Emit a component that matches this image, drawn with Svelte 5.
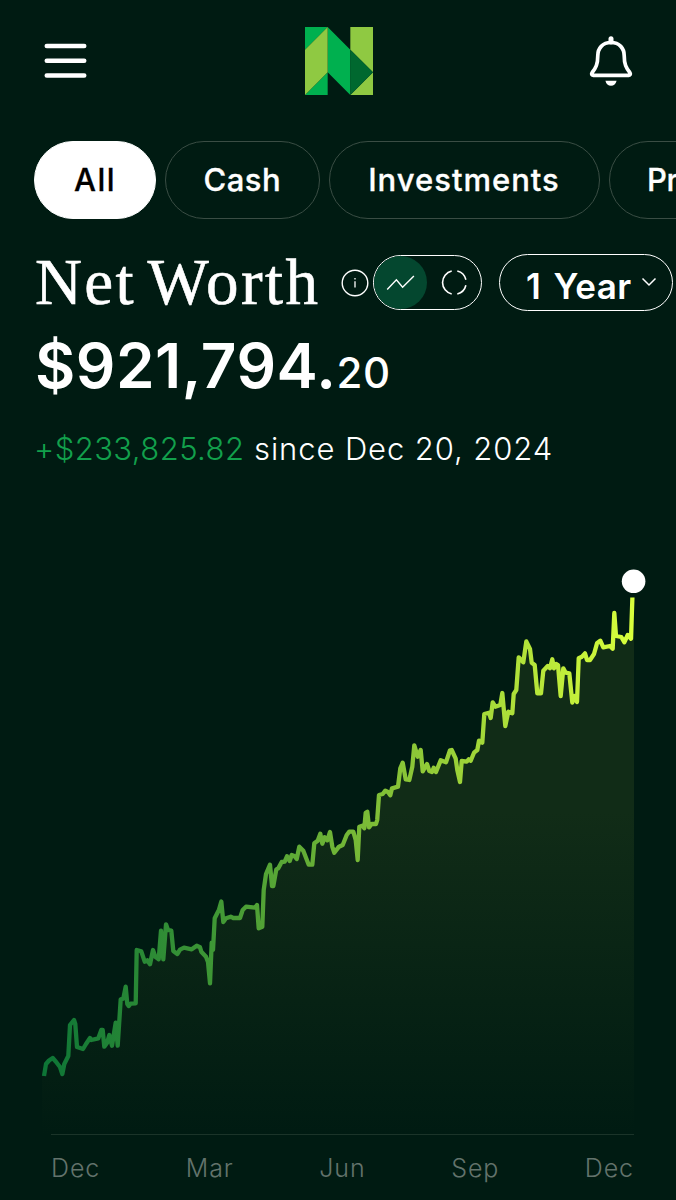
<script>
  const tabs = ['All', 'Cash', 'Investments', 'Pr']
  const months = ['Dec', 'Mar', 'Jun', 'Sep', 'Dec']

  let selected = 'All'
  let view = 'line'

  // x,y pairs in the chart's own space, y = 0 is the top of the screen
  const points = [
    [44,1076],[46,1064],[49,1060.5],[52.7,1058],[56.7,1062.7],[60,1067],[62.3,1074],[64.3,1064],[68.3,1056],[70,1025],[74,1020],[75.3,1024],[77,1047],
    [83,1049],[86,1044],[90,1038],[91.3,1040],[98.3,1038.3],[101.3,1030],[102.7,1030],[104.3,1046.7],[107,1043],[109.3,1035],[112,1045.7],
    [115.7,1022.7],[117.7,1045.7],[120.7,999.3],[123.3,998.7],[125.7,986.7],[127.3,1004],[128.7,1006],[130.7,1003.7],[135.7,1003.3],[136.7,950],
    [141.3,951.3],[144.7,961.7],[147.3,960.3],[150,964.3],[153,950],[155.3,956.7],[158.7,959.3],[161,930.7],[163.3,959.3],[166,924.3],[168,930],
    [171.3,930.7],[173.3,951],[177.3,954],[180,949.7],[184,947.7],[191.7,949.3],[196.7,945.7],[200,947.3],[201.3,951.7],[206,956.7],[208,962],
    [210,983.3],[211.7,942.7],[213,950],[214.7,918.3],[219,909.7],[221.3,901.5],[223.3,922],[226,918.3],[230.7,916.7],[233.3,918],[240,918],
    [242.7,910],[246,906.7],[255,907.7],[257,905],[258.7,928.3],[262.3,926.7],[263.7,890],[266,874],[270,864.7],[272,886],[273.3,886],
    [276.3,869.3],[278.3,868.3],[281.7,862],[284.7,861.7],[287,856.3],[289.7,861],[291.7,855],[294.3,856],[296.7,859],[299.3,846.7],
    [303.3,850.7],[308.7,864.7],[312.3,864.7],[314.3,843.3],[317.7,840.7],[320.3,833.7],[322.3,843.7],[324.7,837.3],[327.3,840.3],[330,832],
    [332.3,846.7],[334.3,852.7],[339,846.7],[342.7,845],[346.7,835],[349.3,831.7],[353.3,831.7],[355.7,840],[357.7,860],[359.3,826.7],
    [362.3,825.7],[364.3,828.3],[365.7,812.7],[367.3,811.7],[369,827.3],[371.7,824],[376,824],[377.2,820],[379,795],[382.7,794],[385.3,790.7],
    [388,792],[390.3,795.3],[392,788.3],[398,786.7],[400.3,768.3],[402.7,762.7],[405.7,779.3],[409.3,780],[412.3,766.7],[414.3,745.3],
    [417.7,756.7],[420.7,750],[422.7,771.3],[427,764],[429.3,771],[432,772],[433.7,767.7],[436,772],[440.7,760.3],[446,762.3],[450,750.3],
    [451.7,750],[455.7,758.7],[457.3,770],[460,782],[461.7,761],[466.7,761.7],[468.7,759.3],[470.7,760.7],[474,752.7],[477.3,750],
    [479,740.7],[482.3,742.7],[484.3,714],[489,712.7],[490.7,718],[492.7,702.3],[495.3,706.7],[500.3,705],[502.3,693],[505.3,726],
    [508.3,711.7],[512.3,713.3],[513.7,694],[516.3,690],[518.7,657.3],[523.3,662.3],[526.3,641.5],[530,649],[531.7,662.7],[534.7,665],
    [537.3,693.3],[541,693.3],[543.3,670.7],[547.7,666],[550,668.3],[552.3,659.3],[554,668.3],[556.3,664],[558,665],[560.7,696],
    [563.3,668.3],[565.7,672.7],[569.3,673.3],[572.3,702.5],[574.7,696],[577,702],[578.7,658.3],[582,656.7],[585,653.3],[587,660],
    [590,660],[594,654],[597,643.3],[600.3,640.7],[603.3,647.3],[610,646],[612.7,648.7],[614.3,613],[616,636],[621.3,637],[624.3,642.3],
    [627.7,635],[631,638.7],[632.4,597.5]
  ]

  const line = 'M' + points.map((p) => p.join(' ')).join('L')
  const area = line + 'L634 597.5V1134H42V1076Z'
</script>

<div class="screen">
  <header class="header">
    <button class="icon" aria-label="Menu">
      <svg width="44" height="36" viewBox="0 0 44 36">
        <path d="M2.8 3H40.2M2.8 17.8H40.2M2.8 32.5H40.2" stroke="#fff" stroke-width="4.6" stroke-linecap="round" />
      </svg>
    </button>
    <svg class="logo" width="68" height="68" viewBox="0 0 3 3">
      <path d="M0 0H1L0 1ZM1 2V3H0ZM1 0L2 1V3L1 2Z" fill="#00b04f" />
      <path d="M1 0V2L0 3V1ZM2 0H3V2L2 1ZM3 2V3H2Z" fill="#8fc942" />
      <path d="M2 1L3 2L2 3Z" fill="#00682f" />
    </svg>
    <button class="icon" aria-label="Notifications">
      <svg width="44" height="52" viewBox="0 0 44 52" fill="none">
        <path d="M22 7.5C13.5 7.5 8.8 13.5 8.8 20.5C8.8 29.5 6.8 33 3.2 37.5C2.2 39 2.6 40.3 4.2 40.3H39.8C41.4 40.3 41.8 39 40.8 37.5C37.2 33 35.2 29.5 35.2 20.5C35.2 13.5 30.5 7.5 22 7.5Z" stroke="#fff" stroke-width="3.7" />
        <path d="M22 3.7V7" stroke="#fff" stroke-width="5" stroke-linecap="round" />
        <path d="M16.4 45.8H27.6C26.8 49.2 24.8 50.8 22 50.8S17.2 49.2 16.4 45.8Z" fill="#fff" />
      </svg>
    </button>
  </header>

  <nav class="tabs">
    {#each tabs as tab}
      <button class="tab {tab.toLowerCase()}" class:active={selected == tab} on:click={() => (selected = tab)}>{tab}</button>
    {/each}
  </nav>

  <section class="title-row">
    <h1>Net Worth</h1>
    <svg class="info" width="28" height="28" viewBox="0 0 28 28" fill="none" stroke="#fff">
      <circle cx="14" cy="14" r="12.8" stroke-width="1.4" />
      <path d="M14 12.2V18.6M14 9V10.4" stroke-width="1.3" />
    </svg>
    <div class="toggle">
      <button class="view" class:on={view == 'line'} aria-label="Line" on:click={() => (view = 'line')}>
        <svg width="30" height="18" viewBox="0 0 30 18" fill="none" stroke="#fff" stroke-width="1.4">
          <path d="M1.2 16.5L10.4 6.8L16.6 14.2L27.9 3" />
        </svg>
      </button>
      <button class="view" class:on={view == 'ring'} aria-label="Breakdown" on:click={() => (view = 'ring')}>
        <svg width="28" height="28" viewBox="0 0 28 28" fill="none" stroke="#fff" stroke-width="1.6">
          <path d="M11.7 3A11.8 11.8 0 0 0 11.7 26M17.3 3A11.8 11.8 0 0 1 25.9 11.7M25.9 17.3A11.8 11.8 0 0 1 17.3 26" />
        </svg>
      </button>
    </div>
    <button class="range">
      <span>1 Year</span>
      <svg width="16" height="10" viewBox="0 0 16 10" fill="none" stroke="#fff" stroke-width="1.5">
        <path d="M1.5 1.5L8 8L14.5 1.5" />
      </svg>
    </button>
  </section>

  <p class="amount">$921,794.<span class="cents">20</span></p>
  <p class="change"><span class="gain">+$233,825.82</span> since Dec 20, 2024</p>

  <svg class="chart" width="676" height="574" viewBox="0 560 676 574">
    <defs>
      <linearGradient id="stroke" gradientUnits="userSpaceOnUse" x1="44" y1="0" x2="634" y2="0">
        <stop offset="0" stop-color="#0d7536" />
        <stop offset="0.28" stop-color="#3d9635" />
        <stop offset="0.6" stop-color="#87c337" />
        <stop offset="0.85" stop-color="#b9e83a" />
        <stop offset="1" stop-color="#d8ff3c" />
      </linearGradient>
      <linearGradient id="fill" gradientUnits="userSpaceOnUse" x1="0" y1="597" x2="0" y2="1134">
        <stop offset="0" stop-color="#112c17" />
        <stop offset="0.4" stop-color="#112c17" />
        <stop offset="1" stop-color="#001b12" />
      </linearGradient>
    </defs>
    <path d={area} fill="url(#fill)" />
    <path d={line} fill="none" stroke="url(#stroke)" stroke-width="4.3" stroke-linejoin="round" />
    <circle cx="633.6" cy="581.3" r="11.8" fill="#fff" />
  </svg>

  <div class="axis">
    {#each months as month}
      <span>{month}</span>
    {/each}
  </div>
</div>

<style>
:global(body) {
  margin: 0;
  background: #001b12;
}

.screen {
  width: 676px;
  height: 1200px;
  overflow: hidden;
  background: #001b12;
  color: #fff;
  font-family: Inter, "Liberation Sans", sans-serif;
}

button {
  padding: 0;
  border: 0;
  background: none;
  color: inherit;
  font: inherit;
  cursor: pointer;
}

svg {
  display: block;
}

.header {
  display: flex;
  justify-content: space-between;
  align-items: center;
  height: 68px;
  padding: 27px 43px 46px 44px;
}

.logo {
  margin-left: 1px;
}

.tabs {
  display: flex;
  gap: 8.5px;
  padding-left: 34px;
}

.tab {
  flex: none;
  box-sizing: border-box;
  height: 78px;
  padding-bottom: 2px;
  border: 1.5px solid #3a4d44;
  border-radius: 39px;
  font-size: 31px;
  font-weight: 500;
  -webkit-text-stroke: 0.3px currentColor;
}

.tab.active {
  background: #fff;
  border-color: #fff;
  color: #000;
}

.all {
  width: 122px;
  letter-spacing: 1.4px;
}

.cash {
  width: 155.5px;
  letter-spacing: 0.5px;
}

.investments {
  width: 271px;
  letter-spacing: 1px;
}

.pr {
  width: 160px;
  margin-left: 0.5px;
  padding-left: 37.5px;
  text-align: left;
  letter-spacing: -0.5px;
}

.title-row {
  display: flex;
  align-items: center;
  height: 58px;
  margin-top: 34px;
  padding-left: 35px;
}

h1 {
  width: 306px;
  margin: 0;
  font: 400 65px/58px "Liberation Serif", serif;
  letter-spacing: 2.4px;
  word-spacing: -6px;
  white-space: nowrap;
  -webkit-text-stroke: 0.6px #fff;
}

.info {
  flex: none;
  margin: 2px 4px 0 0;
}

.toggle {
  display: flex;
  flex: none;
  box-sizing: border-box;
  width: 109px;
  height: 55px;
  border: 1.5px solid #fff;
  border-radius: 28px;
}

.view {
  display: flex;
  align-items: center;
  justify-content: center;
  width: 53px;
  height: 53px;
  border-radius: 50%;
}

.view.on {
  background: #04472f;
}

.range {
  display: flex;
  flex: none;
  align-items: center;
  gap: 9px;
  box-sizing: border-box;
  width: 174px;
  height: 57px;
  margin-left: 17px;
  padding: 8px 0 0 26px;
  border: 1.5px solid #fff;
  border-radius: 29px;
  font-size: 35px;
  font-weight: 600;
  letter-spacing: 0.4px;
  word-spacing: 3px;
}

.range svg {
  margin-top: -8px;
}

.amount {
  margin: 24px 0 0 35px;
  font-size: 62px;
  line-height: 62px;
  font-weight: 600;
  letter-spacing: 0.5px;
}

.cents {
  font-size: 42px;
  font-weight: 500;
  line-height: 1;
}

.change {
  margin: 34px 0 0 34px;
  font-size: 31px;
  line-height: 36px;
  font-weight: 300;
  letter-spacing: 0.9px;
  white-space: nowrap;
}

.gain {
  color: #12a04c;
  letter-spacing: 0.42px;
}

.chart {
  margin-top: 93px;
}

.axis {
  display: flex;
  justify-content: space-between;
  margin: 0 42px 0 51px;
  padding-top: 18px;
  border-top: 1.5px solid #1b3429;
  color: #63736c;
  font-size: 25px;
  line-height: 30px;
  font-weight: 300;
  letter-spacing: 0.9px;
}
</style>
